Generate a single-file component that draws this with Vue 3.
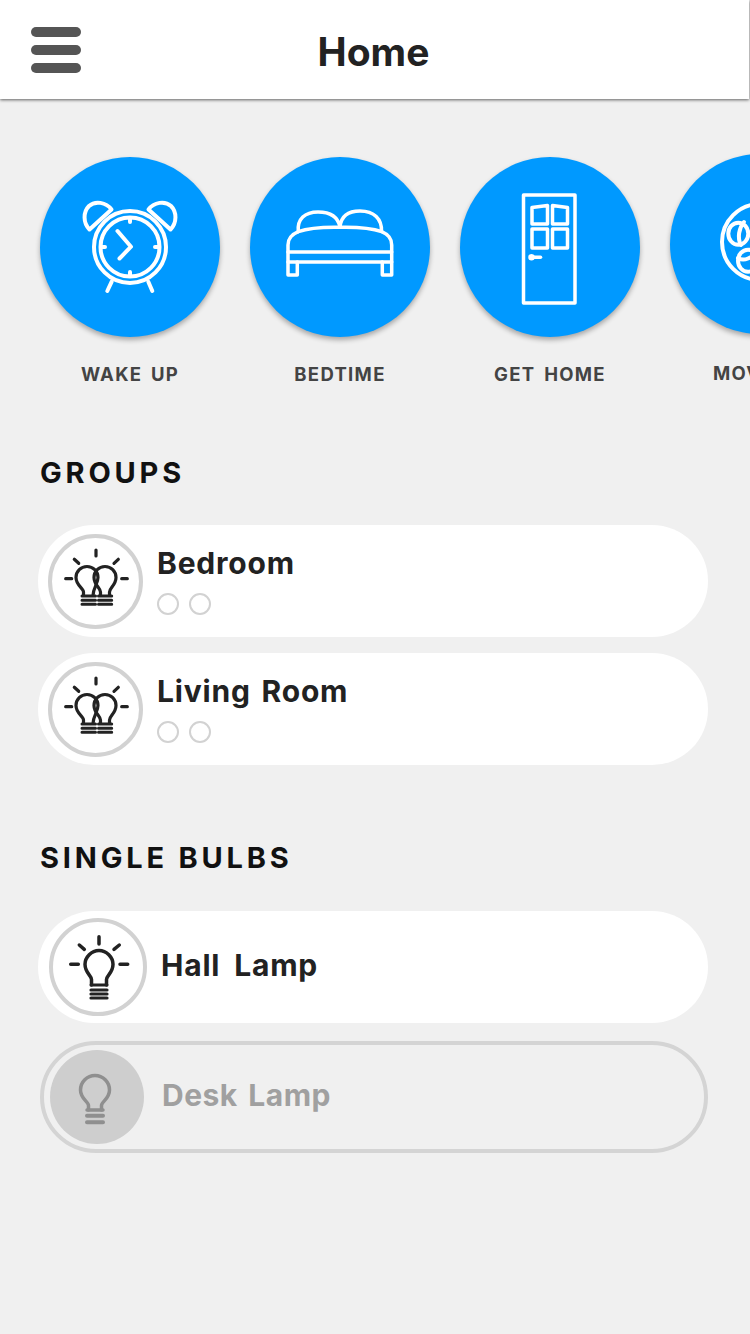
<script setup>
const scenes = [
  { name: 'WAKE UP', icon: 'alarm' },
  { name: 'BEDTIME', icon: 'bed' },
  { name: 'GET HOME', icon: 'door' },
  { name: 'MOVIE TIME', icon: 'film' },
];
const groups = ['Bedroom', 'Living Room'];
</script>

<template>
  <div class="page">
    <header class="topbar">
      <button class="menu" aria-label="Menu"><span></span><span></span><span></span></button>
      <h1>Home</h1>
    </header>

    <div class="scenes">
      <div v-for="s in scenes" :key="s.name" class="scene" :class="s.icon">
        <div class="scene-circle">
          <svg viewBox="0 0 180 180" width="180" height="180" fill="none" stroke="#fff" stroke-width="3.500" stroke-linecap="round" stroke-linejoin="round">
            <g v-if="s.icon === 'alarm'" stroke-width="4">
              <path d="M71.5 52.5C66 45 55 43.5 49 49C43 55 43 66 49.5 72.5Z" />
              <path d="M108.500 52.5C114 45 125 43.5 131 49C137 55 137 66 130.500 72.5Z" />
              <circle cx="90" cy="90" r="36" />
              <circle cx="90" cy="90" r="29.500" />
              <path d="M90 62V65M90 115V118M62 90H65M115 90H118" />
              <path d="M77.500 74L91 89.700L79.500 101.500" />
              <path d="M71.700 124.700L67.300 134M108.300 124.700L112.300 134" />
            </g>
            <g v-else-if="s.icon === 'bed'">
              <path d="M38 95V88C38 80 43 77 48.300 74.700C60 70.500 75 70 90 70.300C105 70 120 70.500 131.700 74.700C137 77 141.700 80 141.700 88V95Z" />
              <path d="M38 95V118H47.300V105H132.300V118H141.700V95" />
              <path d="M47.300 105H38" />
              <path d="M132.300 105H141.700" />
              <path d="M48.300 74.700C47 62 55 55 68 55C80 55 88 60 90 70C91 60 97 54 110 54C124 54 132 62 131.500 74.500" />
            </g>
            <g v-else-if="s.icon === 'door'">
              <rect x="63.500" y="38" width="51.500" height="108" />
              <path d="M72 50.500L87.500 48.500V67H72Z" />
              <path d="M92.500 48.500L107.500 50.500V67H92.500Z" />
              <rect x="72" y="72" width="15.500" height="19" />
              <rect x="92.500" y="72" width="15" height="19" />
              <path d="M72 100.300H80.500" />
              <circle cx="71.500" cy="100.300" r="1.500" fill="#fff" />
            </g>
            <g v-else stroke-width="4">
              <circle cx="90" cy="88" r="38" />
              <ellipse cx="68.300" cy="79.700" rx="10" ry="11" />
              <path d="M74 68C69 74 67 84 71 91" />
              <ellipse cx="78" cy="106.700" rx="10" ry="11" />
              <path d="M68 104C74 108 82 104 88 96" />
            </g>
          </svg>
        </div>
        <span class="scene-name">{{ s.name }}</span>
      </div>
    </div>

    <h2 class="section-title">GROUPS</h2>
    <div class="list">
      <div v-for="g in groups" :key="g" class="row group-row">
        <div class="bulb-ring">
          <svg viewBox="0 0 87 86" width="87" height="86" fill="none" stroke="#222" stroke-width="3.200" stroke-linecap="round" stroke-linejoin="round">
            <path d="M44 12V18M22.300 21.300L26.700 25.300M66.300 21.300L62 25.300M13.700 40.700H19.700M69.700 40.700H75.300" />
            <path d="M31.500 57.500V54C31.500 50 24 47.500 24 39.500C24 33 29 28.500 35 28.500C41 28.500 46 33 46 39.500C46 46 41 50 41 57.500" />
            <path d="M48.500 57.500V54C48.500 50 42 47 42 39.500C42 33 47 28.500 53 28.500C59 28.500 64 33 64 39.500C64 47 57.500 50 57.500 54V57.500" />
            <path d="M30 58H43.500M30 62.300H43.500M30 66.300H43.500M46.500 58H59.700M46.500 62.300H59.700M46.500 66.300H59.700" stroke-width="3" />
          </svg>
        </div>
        <div class="group-info">
          <span class="row-name">{{ g }}</span>
          <div class="dots"><i></i><i></i></div>
        </div>
      </div>
    </div>

    <h2 class="section-title singles">SINGLE BULBS</h2>
    <div class="list singles-list">
      <div class="row hall">
        <div class="bulb-ring">
          <svg viewBox="0 0 89 89" width="89" height="89" fill="none" stroke="#222" stroke-width="3.500" stroke-linecap="round" stroke-linejoin="round">
            <path d="M45 13.700V21M25.300 22L30.300 26.300M65.300 22L60 26.300M16.700 41.300H24.300M66 41.300H73.700" />
            <path d="M37.500 62V56.500C37.500 52.500 31 50 31 41.300C31 34 37.500 27.500 45 27.500C52.500 27.500 59 34 59 41.300C59 50 52.500 52.500 52.500 56.500V62" />
            <path d="M37 62H53" stroke-width="3" />
            <path d="M37 67H53M37 71H53M37 75H53" stroke-width="3.200" />
          </svg>
        </div>
        <span class="row-name">Hall Lamp</span>
      </div>
      <div class="row off">
        <div class="bulb-off">
          <svg viewBox="0 0 94 94" width="94" height="94" fill="none" stroke="#8f8f8f" stroke-width="3.500" stroke-linecap="round" stroke-linejoin="round">
            <path d="M38.500 60V55.500C38.500 51.500 30.500 49 30.500 40C30.500 32 37 25.500 45 25.500C53 25.500 59.500 32 59.500 40C59.500 49 51.500 51.500 51.500 55.500V60" />
            <path d="M37 60H53" />
            <path d="M37 65.700H53M37 72.300H53" stroke-width="4" />
          </svg>
        </div>
        <span class="row-name">Desk Lamp</span>
      </div>
    </div>
  </div>
</template>

<style>
html, body {
  margin: 0;
  background: #f0f0f0;
}
</style>

<style scoped>
.page {
  width: 750px;
  height: 1334px;
  overflow: hidden;
  background: #f0f0f0;
  font-family: Inter, "Open Sans", sans-serif;
  color: #222;
}
.topbar {
  display: grid;
  grid-template-columns: 1fr auto 1fr;
  align-items: center;
  width: 749px;
  height: 99px;
  padding: 0 31px;
  box-sizing: border-box;
  background: #fff;
  box-shadow: 0 1px 3px rgba(0, 0, 0, 0.6);
}
.topbar h1 {
  margin: 4px 2px 0 0;
  font-size: 39px;
  font-weight: 700;
  line-height: 1;
}
.menu {
  display: flex;
  flex-direction: column;
  gap: 8px;
  width: 50px;
  padding: 0;
  border: none;
  background: none;
}
.menu span {
  height: 10px;
  border-radius: 5px;
  background: #555;
}
.scenes {
  display: flex;
  gap: 30px;
  padding: 58px 0 0 40px;
  overflow: hidden;
}
.scene {
  display: flex;
  flex-direction: column;
  align-items: center;
  flex-shrink: 0;
  width: 180px;
}
.scene.film {
  margin-top: -3px;
}
.scene-circle {
  width: 180px;
  height: 180px;
  border-radius: 50%;
  background: #0099ff;
  box-shadow: 0 3px 5px rgba(0, 0, 0, 0.3);
}
.scene-circle svg {
  display: block;
}
.scene-name {
  margin-top: 25px;
  font-size: 18.500px;
  line-height: 24px;
  font-weight: 700;
  letter-spacing: 1.300px;
  word-spacing: 3px;
  color: #444;
  white-space: nowrap;
}
.film .scene-name {
  align-self: flex-start;
  margin-top: 27px;
  margin-left: 43px;
}
.section-title {
  margin: 69px 0 0 40px;
  font-size: 29px;
  line-height: 36px;
  font-weight: 700;
  letter-spacing: 3.800px;
  color: #111;
}
.section-title.singles {
  margin-top: 75px;
}
.list {
  display: flex;
  flex-direction: column;
  gap: 16px;
  margin: 34px 0 0 38px;
}
.singles-list {
  margin-top: 35px;
}
.row {
  display: flex;
  align-items: center;
  width: 670px;
  height: 112px;
  box-sizing: border-box;
  border-radius: 56px;
  background: #fff;
}
.group-row {
  padding-left: 10px;
  gap: 14px;
}
.hall {
  padding-left: 11px;
  gap: 14px;
  margin-bottom: 2px;
}
.off {
  width: 668px;
  margin-left: 2px;
  padding-left: 6px;
  gap: 18px;
  background: transparent;
  border: 4px solid #d4d4d4;
}
.bulb-ring {
  display: flex;
  align-items: center;
  justify-content: center;
  flex-shrink: 0;
  width: 95px;
  height: 95px;
  box-sizing: border-box;
  border: 4px solid #d2d2d2;
  border-radius: 50%;
}
.hall .bulb-ring {
  width: 98px;
  height: 98px;
}
.bulb-off {
  flex-shrink: 0;
  width: 94px;
  height: 94px;
  border-radius: 50%;
  background: #cecece;
}
.bulb-ring svg,
.bulb-off svg {
  display: block;
}
.row-name {
  font-size: 30px;
  line-height: 38px;
  font-weight: 700;
  letter-spacing: 0.800px;
  word-spacing: 3px;
  color: #222;
}
.hall .row-name,
.off .row-name {
  margin-top: -4px;
}
.hall .row-name {
  word-spacing: 6px;
}
.off .row-name {
  letter-spacing: 0.500px;
  color: #a0a0a0;
}
.group-info {
  display: flex;
  flex-direction: column;
  margin-top: -4px;
}
.dots {
  display: flex;
  gap: 10px;
  margin-top: 11px;
}
.dots i {
  width: 22px;
  height: 22px;
  box-sizing: border-box;
  border: 2px solid #d2d2d2;
  border-radius: 50%;
}
</style>
